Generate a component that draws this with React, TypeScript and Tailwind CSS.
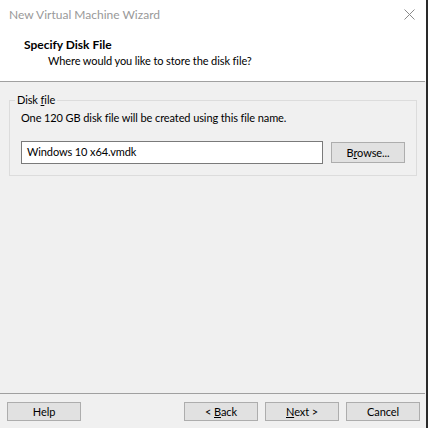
import React from "react";

const font = { fontFamily: 'Lato, "Noto Sans", Arial, sans-serif' };

function Btn({ children, className = "" }: { children: React.ReactNode; className?: string }) {
  return (
    <div
      className={`flex w-[74px] items-center justify-center border border-[#adadad] bg-[#e1e1e1] text-[11px] leading-none tracking-[-0.1px] text-black ${className}`}
    >
      <span className="whitespace-pre">{children}</span>
    </div>
  );
}

export default function App() {
  return (
    <div className="flex h-[428px] w-[428px] overflow-hidden" style={font}>
      <div className="flex w-[426px] flex-col bg-[#f0f0f0]">
        {/* title bar */}
        <div className="flex h-[30px] items-center justify-between bg-white pl-[9px] pr-[11px]">
          <span className="text-[12px] leading-none text-[#999999]">New Virtual Machine Wizard</span>
          <svg width="11" height="11" viewBox="0 0 11 11" className="mb-[1px]">
            <path d="M0.5 0.5 L10.5 10.5 M10.5 0.5 L0.5 10.5" stroke="#8a8a8a" strokeWidth="1" />
          </svg>
        </div>
        {/* header */}
        <div className="flex h-[51px] flex-col bg-white pl-[24px] pt-[7px]">
          <div className="text-[12px] font-bold leading-[16px] text-black">Specify Disk File</div>
          <div className="pl-[24px] text-[11px] leading-[16px] tracking-[-0.1px] text-black">
            Where would you like to store the disk file?
          </div>
        </div>
        <div className="h-[1px] w-[425px] bg-[#a0a0a0]" />
        {/* body */}
        <div className="flex flex-1 flex-col px-[9px] pt-[10px] text-[11px] tracking-[-0.1px]">
          <fieldset className="w-[408px] border border-[#dcdcdc] px-[11px] pb-[11px]">
            <legend className="ml-[-6px] px-[2px] leading-[16px] text-black">
              Disk <span className="underline">f</span>ile
            </legend>
            <div className="pt-[2px] leading-[16px] text-black">
              One 120 GB disk file will be created using this file name.
            </div>
            <div className="mt-[15px] flex items-center gap-[8px]">
              <div className="flex h-[23px] w-[302px] items-center border border-[#7a7a7a] bg-white pl-[5px] text-black">
                Windows 10 x64.vmdk
              </div>
              <Btn className="h-[21px]">
                B<span className="underline">r</span>owse...
              </Btn>
            </div>
          </fieldset>
        </div>
        {/* footer */}
        <div className="h-[1px] w-[425px] bg-[#a0a0a0]" />
        <div className="flex h-[34px] items-start gap-[7px] pl-[7px] pt-[8px]">
          <Btn className="h-[19px]">Help</Btn>
          <div className="flex-1" />
          <Btn className="h-[19px]">
            {"< "}
            <span className="underline">B</span>ack
          </Btn>
          <Btn className="h-[19px]">
            <span className="underline">N</span>
            {"ext >"}
          </Btn>
          <Btn className="h-[19px] mr-[6px]">Cancel</Btn>
        </div>
      </div>
      <div className="w-[2px] bg-[#2a2a2a]" />
    </div>
  );
}
